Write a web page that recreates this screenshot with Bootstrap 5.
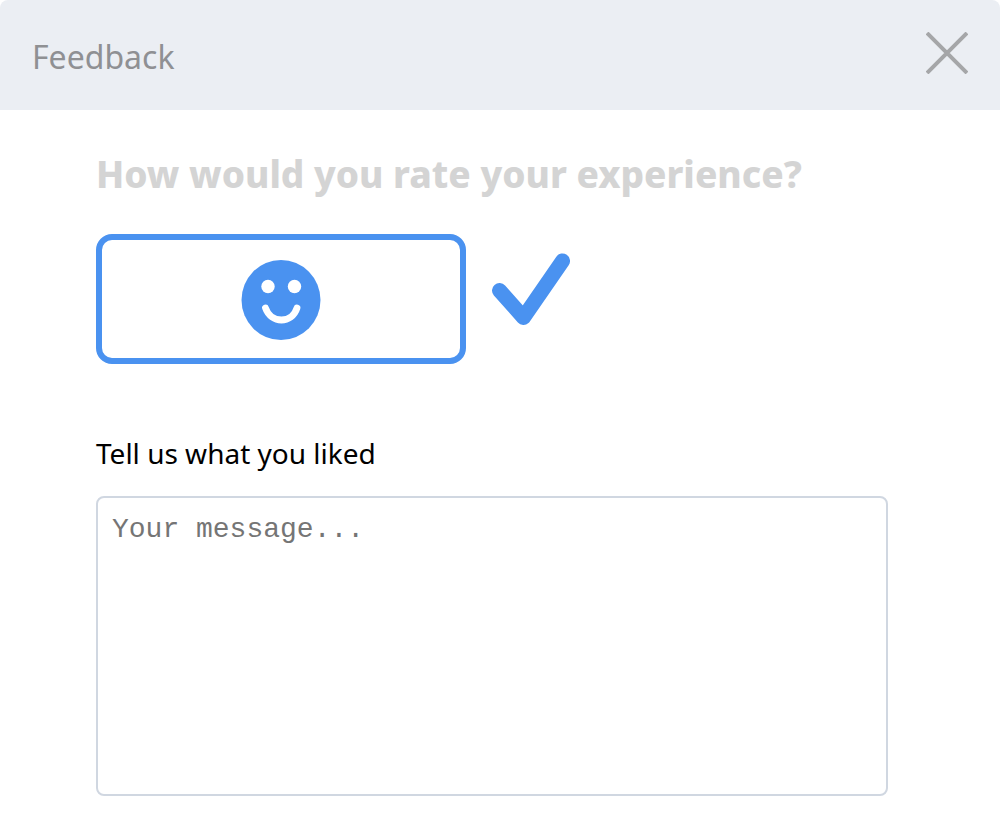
<!DOCTYPE html>
<html lang="en">
<head>
<meta charset="utf-8">
<meta name="viewport" content="width=device-width, initial-scale=1">
<title>Feedback</title>
<link href="https://cdn.jsdelivr.net/npm/bootstrap@5.3.0/dist/css/bootstrap.min.css" rel="stylesheet">
<style>
  body { font-family: "Noto Sans", sans-serif; color: #000; background: #fff; }
  .panel-header { padding: 32px 32px 28px; background: #ebeef3; border-radius: 8px 8px 0 0; }
  .panel-title { font-size: 32px; line-height: 50px; color: #8f9093; }
  .close-button { color: #a5a6a8; }
  .panel-body { padding: 40px 112px 20px 96px; }
  .question { font-size: 37px; line-height: 48px; font-weight: 800; color: #d4d4d4; margin-bottom: 36px; }
  .rating { width: 370px; height: 130px; border: 6px solid #4a92f0; border-radius: 16px; background: #fff; }
  .rating:hover { background: #f5f9ff; }
  .rating-row { gap: 26px; margin-bottom: 70px; }
  .message-label { font-size: 28px; line-height: 38px; margin-bottom: 24px; }
  .message-box { height: 300px; padding: 14px; border: 2px solid #d0d7e1; border-radius: 8px; resize: none;
    font-family: Courier, "Courier New", "Liberation Mono", monospace; font-size: 28px; line-height: 36px; }
  .message-box::placeholder { color: #757575; }
</style>
</head>
<body>
<main>
  <header class="panel-header d-flex align-items-start justify-content-between">
    <h1 class="panel-title fw-normal mb-0">Feedback</h1>
    <button type="button" class="close-button btn border-0 p-0" aria-label="Close">
      <svg class="d-block" width="42" height="42" viewBox="0 0 42 42" fill="none" stroke="currentColor" stroke-width="4"><path d="M1 1 41 41M41 1 1 41"/></svg>
    </button>
  </header>
  <form class="panel-body">
    <h2 class="question">How would you rate your experience?</h2>
    <div class="rating-row d-flex align-items-start">
      <button type="button" class="rating d-flex align-items-center justify-content-center p-0" aria-label="Good" aria-pressed="true">
        <svg width="80" height="82" viewBox="0 0 80 82">
          <ellipse cx="40" cy="42" rx="39.500" ry="40" fill="#4a92f0"/>
          <circle cx="27" cy="28.500" r="6.700" fill="#fff"/>
          <circle cx="53.500" cy="28.500" r="6.700" fill="#fff"/>
          <path d="M24.500 50C30 66 51 66 56 50" fill="none" stroke="#fff" stroke-width="6.800" stroke-linecap="round"/>
        </svg>
      </button>
      <svg width="78" height="110" viewBox="0 0 78 110" fill="none" stroke="#4a92f0" stroke-width="15" stroke-linecap="round" stroke-linejoin="round" aria-hidden="true"><path d="M7.500 56.500 31.500 83.500 70.500 27"/></svg>
    </div>
    <label for="message" class="message-label d-block">Tell us what you liked</label>
    <textarea id="message" class="message-box form-control" placeholder="Your message..."></textarea>
  </form>
</main>
<script src="https://cdn.jsdelivr.net/npm/bootstrap@5.3.0/dist/js/bootstrap.bundle.min.js"></script>
</body>
</html>
